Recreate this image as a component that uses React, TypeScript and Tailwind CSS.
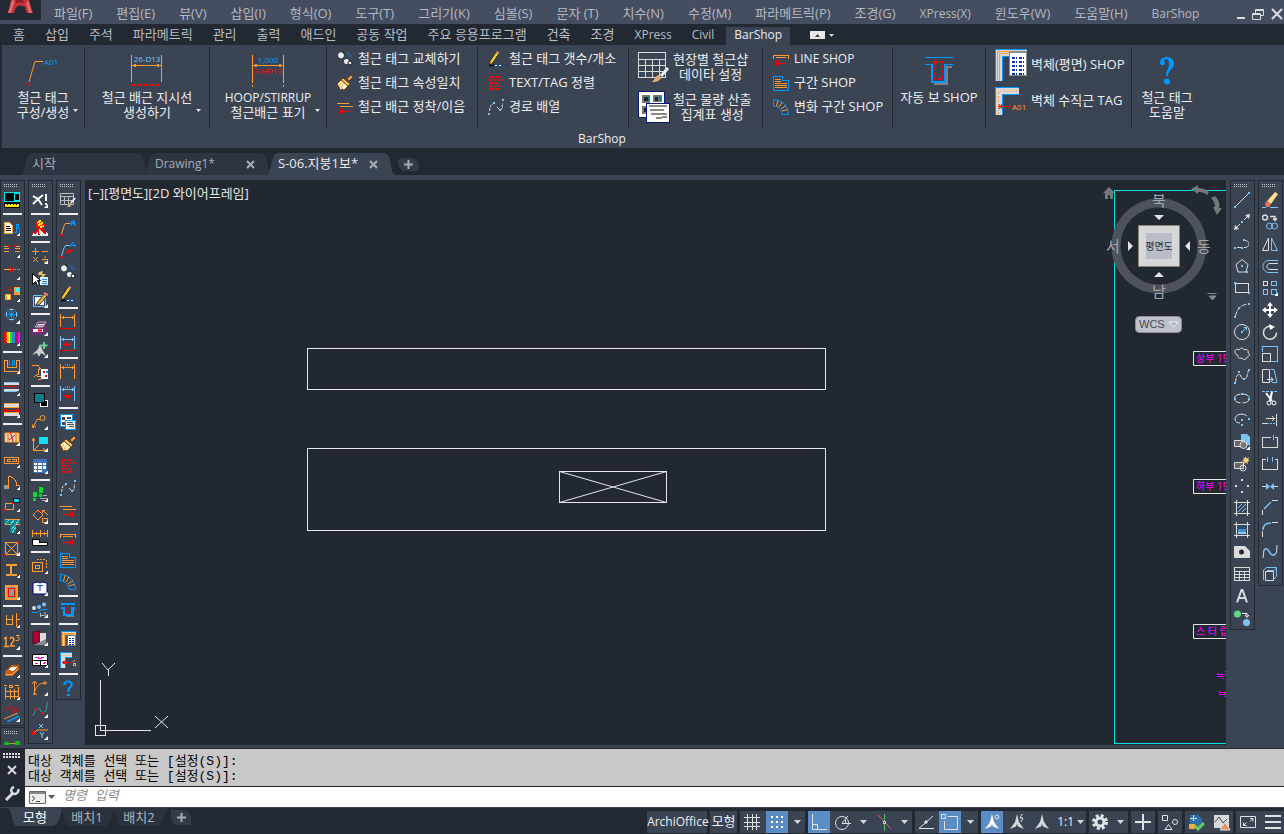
import type { ReactNode } from 'react';
import clsx from 'clsx';

const O = '#ff9b30';
const B = '#0098ff';
const L = '#7cc4f8';
const R = '#ff0000';
const W = '#dcdcdc';
const N = 'none';

// [path, stroke, fill, stroke width, dash]
type Mark = [string, string, string?, number?, string?];
type IconDef = { marks: Mark[]; fly?: boolean; smooth?: boolean };

const tagLine: Mark[] = [
  ['M1.500 14l2.500-8 1.500-2.500H10', O],
  ['M10.500 5.500l1.500-4h2l1.500 4M11 3.500h4', B, N, 1.5],
  ['M.5 14.500h2v1h-2z', R],
];
const swapMarks: Mark[] = [
  ['M8 2c3-1.500 5 0 5 4M11 4l2 2 2-2', '#2d5c96', N, 1.5],
  ['M1 4a3 3 0 1 0 5-2a3 3 0 0 0-5 2z', N, '#e8eef2'],
  ['M5 1h2v2', '#222', N, 1],
  ['M7 11a2.500 2.500 0 1 0 5-1a2.500 2.500 0 0 0-5 1z', N, '#e8eef2'],
  ['M11 12a2 2 0 1 0 4 0a2 2 0 0 0-4 0z', '#111', '#e8eef2', 1],
];
const pencilDim: Mark[] = [
  ['M2 14L1.500 11 8 1l3 1.500L4.500 12z', '#3a2b10', '#f5cf30', 1],
  ['M8 1l1-1 2.500 1.500L10.500 3z', N, '#e88a90'],
  ['M1 14.500h5', '#111', N, 2],
  ['M6 14.500h10', '#1f4c80', N, 3],
  ['M7 14.500h8', '#fff', N, 1, '2 2'],
];
const brushMarks: Mark[] = [
  ['M10 4l4-4 2 2-4 4z', '#7a4010', '#f0a050', 1],
  ['M6 3l7 6-2 2-7-6z', '#7a4010', '#ffd060', 1],
  ['M4 5l7 6-4 4-2-1-2 1-1-3-2-3z', '#7a4010', '#fff6c0', 1],
  ['M4 8l-2 3M6 10l-2 3', O, N, 1],
];
const lapMarks: Mark[] = [
  ['M0 4.500h12M3 7.500h13', O],
  ['M3.500 9v6M12.500 9v6M4 12.500h9M5.500 11v3M10.500 11v3', R],
];
const lineShop: Mark[] = [
  ['M.5 8V4.500h15V8M3 6.500h10', O],
  ['M3.500 9v6M12.500 9v6M4 12.500h8M5.500 11v3M10.500 11v3', R],
];
const sectionShop: Mark[] = [
  ['M.5 1.500h9v4h6v10H.5z', B],
  ['M2 4.500h6M2 6.500h6M2 8.500h12M2 10.500h12M2 12.500h12', O],
];
const arcShop: Mark[] = [
  ['M.5 7V.5c8 0 15 6 15 15H9c0-5-4-8.500-8.500-8.500z', B],
  ['M3.500 7L5 1.500M6 8l3-5M8 10l5-3.500M9 12l5.500-1.500', O],
];
const bricks: Mark[] = [
  ['M1 2h13', R, N, 2, '5 1'],
  ['M1 5h15', R, N, 2, '3 1'],
  ['M1 8h9', R, N, 2, '5 1'],
  ['M1 11h13', R, N, 2, '3 1'],
  ['M1 14h11', R, N, 2, '5 1'],
];
const pathArray: Mark[] = [
  ['M1.500 12l1-5 3-3 2 1M9 8l3 3 2-1 .5-6', W, N, 1, '3 1'],
  ['M0 14h2v2H0zM5 3h2v2H5zM11 10h2v2h-2zM14 0h2v2h-2z', N, L],
];
const beamMarks: Mark[] = [
  ['M6 14.500h7.500V7', '#777'],
  ['M1 2h14M1 6h3v7h8V6h3', B, N, 2],
  ['M6.500 4.500h3v6h-3z', R, N, 1, '2 1'],
];
const wallShop: Mark[] = [
  ['M1 16V1h15v4H5v11z', B, '#dadada', 1],
  ['M2.500 16V3h12M4 16V4.500h10', O],
  ['M7.500 5.500h8v10h-8z', '#777', '#fff', 1],
  ['M10 8v7M13 8v7', '#0b33b8', N, 2, '1 1'],
];
const wallTag: Mark[] = [
  ['M0 0h12v6H6v10H0z', N, '#dadada'],
  ['M.5 16V.5H12M12 5.500H5.500V16', B],
  ['M2 3.500h10', O, N, 1, '1 2'],
  ['M3 10.500h9M6 8l-3 2.500 3 2.500', R],
  ['M13 10l2-2M13 11h2v2h-2z', O],
];
const helpMarks: Mark[] = [
  ['M4.500 5V3.500L6.500 1.500h3l2 2v2.500L8.500 9v3', B, N, 2],
  ['M7 14h3v2H7z', N, B],
];
const dimBar = (c: string): Mark[] => [
  ['M.5 0v13M14.500 0v13M1 3.500h13M3 2v3M12 2v3', c],
];

const ICONS: Record<string, IconDef> = {
  monitor: { marks: [['M0 0h16v10H0z', N, '#00e5ee'], ['M1 1h9v8H1zM11 2h4v6h-4z', N, '#000'], ['M0 10h16v6H0z', N, '#000'], ['M1 12h14v3H1z', N, '#ffee00'], ['M3.500 12v1M6.500 12v1M9.500 12v1M12.500 12v1', '#000']] },
  noteA: { fly: true, marks: [['M.5 2.500h5l3 3v8h-8z', O, '#fff'], ['M2 6.500h4M2 8.500h5M2 10.500h5', '#000'], ['M10 12.500h2V9l1-5h1l1 5v3M12 8.500h3', B]] },
  rebar: { fly: true, marks: [['M0 4.500h5M0 6.500h5M0 9.500h5M11 4.500h5M11 6.500h5M11 9.500h5', O, N, 1], ['M4 3l2 2M10 3l2 2M4 5l2-2M10 5l2-2', R]] },
  breakLine: { fly: true, marks: [['M0 5.500h8', O], ['M9 5.500h7', O, N, 1, '1 1'], ['M6 3.500l4 4M10 3.500l-4 4', R]] },
  matchProp: { fly: true, marks: [['M1 8h6v6H1z', N, '#ff9b30'], ['M3 9h3v4H3z', N, '#ffff80'], ['M10 1h6v8h-6z', N, O], ['M12 2h3v4h-3z', N, '#40f0f0'], ['M3 7l1-3 4-1M6 1l2 2-2 2', R]] },
  snow: { fly: true, smooth: true, marks: [['M7.500 0v13M1 6.500h13M3 2l9 9M12 2l-9 9', B], ['M5 1.500h5M5 11.500h5M2.500 4v5M12.500 4v5', L]] },
  palette: { fly: true, marks: [['M1.500 2v11', R, N, 3], ['M4.500 2v11', '#ffee00', N, 3], ['M7 2v11', '#20e030', N, 2], ['M9.500 2v11', '#2090d0', N, 3], ['M12.500 2v11', '#a02050', N, 3], ['M15 2v11', '#ff00ff', N, 2], ['M2 4.500h3M2 7.500h3M2 10.500h3', O]] },
  channel: { fly: true, marks: [['M.5 2.500h3v7h9v-7h3v11H.5z', O], ['M5.500 2v6M8.500 2v6M10.500 2v6', B]] },
  wallRed: { fly: true, marks: [['M0 3h15v2H0zM0 9h15v2H0z', N, '#dcdcdc'], ['M0 6.500h15', R, N, 1, '4 1'], ['M0 2.500h15M0 11.500h13', L]] },
  wallDots: { fly: true, marks: [['M0 1h15v4H0zM0 11h15v3H0z', N, '#dcdcdc'], ['M0 5.500h15M0 10.500h15M0 1.500h15', O], ['M.5 7.500h2v2H.5zM12.500 7.500h2v2h-2z', R, '#000'], ['M4 8.500h8', R, N, 1, '1 1']] },
  column: { fly: true, smooth: true, marks: [['M1 3h14v9H1z', O, '#e0e0e0'], ['M4 3v9M12 3v9', O, N, 2], ['M6 1l4 14M5 10l6-5', R]] },
  slab: { fly: true, marks: [['M.5 5.500h14v6H.5zM3 7.500h9v2H3z', O], ['M7.500 0v16', R, N, 1, '2 1']] },
  door: { fly: true, marks: [['M0 11h5v4H0z', N, '#999'], ['M4.500 14V2.500c5 0 8 4 8 9h3', O]] },
  boxes: { fly: true, marks: [['M1.500 7.500h8v6h-8z', O], ['M9.500 2.500h6v4h-6z', '#000', '#00e5ee', 1], ['M0 13h2v2H0zM8 6h2v2H8z', N, R]] },
  hatchT: { fly: true, marks: [['M0 1h16v6h-4v8H6V7H0z', N, '#167f88'], ['M1 6l5-5M6 7l5-6M7 12l8-10M8 15l4-6', '#50e0e0'], ['M.5 1.500h15M.5 6.500H6M12 6.500h4', O]] },
  crossBox: { fly: true, smooth: true, marks: [['M1.500 2.500h12v12h-12zM1.500 2.500l12 12M13.500 2.500l-12 12', O], ['M0 14h2v2H0zM13 1h2v2h-2z', N, R]] },
  ibeam: { fly: true, marks: [['M2 3h11M2 13h11M7 3v10', O, N, 2]] },
  frameRed: { fly: true, marks: [['M2 2h11v13H2z', O, '#999', 2], ['M4.500 4.500h6v8h-6z', R]] },
  ba: { fly: true, marks: [['M2.500 3v9h6V3M2.500 7.500h6M12.500 1v14M13 7.500h3', O]] },
  num: { fly: true, smooth: true, marks: [['M0 5l2-1.500V12M0 12.500h5M6 5l1-1.500h2l1 2L6.500 12H11', O, N, 1.5], ['M12 1.500h3l-1.500 2 2 1-1 2h-3', O]] },
  stairs: { fly: true, marks: [['M1 10l6-7h8v5l-7 6H1z', N, '#c86010'], ['M4 8l3-3h6l-4 4z', N, '#fff'], ['M2 12h7l5-5', '#ffb060']] },
  dimStack: { fly: true, marks: [['M1.500 3v12M14.500 3v12M6.500 5v10M10.500 5v10M2 7.500h12M2 12.500h12', O], ['M0 1.500h3M5.500 1.500h3v2h-3zM11 1.500h4', O]] },
  rotateLine: { fly: true, smooth: true, marks: [['M1 6c0-5 7-6 9-3l2 3M12 1v5H7', R], ['M0 13l14-6', O], ['M3 16l12-6', B, N, 1.5]] },
  nodes: { smooth: true, marks: [['M3 4.500h10', '#c09050'], ['M0 5a2.500 2.500 0 1 0 5 0a2.500 2.500 0 0 0-5 0zM11 4a2.500 2.500 0 1 0 5 0a2.500 2.500 0 0 0-5 0z', N, '#10c010'], ['M0 9h10', B, N, 2]] },

  xbang: { fly: true, smooth: true, marks: [['M1 4l5 3 5-4M1 12l5-5 4 6', '#fff', N, 2], ['M14 2v7M14 11v2', '#fff', N, 2]] },
  fire: { marks: [['M4 1h7l2 4-2 4H5L3 5z', N, R], ['M5 3l3-2-1 4 3-2-1 4 3-1', '#ffee00', N, 1.5], ['M0 16l3-5 4-2 3 1 6 3v3z', N, '#eee'], ['M2 14l4-4 1 5M9 9l5 5', R, N, 1.5]] },
  calc: { fly: true, smooth: true, marks: [['M3.500 0v7M0 3.500h7M10 3.500h6M1 9l5 5M6 9l-5 5M10 11.500h6', O], ['M13 8v2M13 13v2', O]] },
  quickSel: { smooth: true, marks: [['M7 2l4-1-1 3h4l-5 5 1-4H6z', N, '#f0c860'], ['M8 7h8v8H8z', N, '#d8f0ff'], ['M10 9.500h5M10 11.500h5M10 13.500h5', '#2090e0'], ['M.5 3.500v11l3-3 2 4 2-1-2-4h3z', '#000', '#fff']] },
  pencilBox: { fly: true, smooth: true, marks: [['M1.500 3.500h12v11h-12z', L, '#1c4f80'], ['M3 5h9v8H3z', N, '#fff'], ['M3 13l9-8', L], ['M4 14l1-3 7-9 3 2-7 8z', '#4a3510', '#e0b840'], ['M12 1l4 2', '#e88a90', N, 2]] },
  printer: { fly: true, smooth: true, marks: [['M3 7l3-5h8l-3 5z', '#cfa0c8', '#5c3a60'], ['M6 4.500h6M5 6h6', '#eee'], ['M0 8h11l4-3v6l-3 4H0z', N, '#703070'], ['M1 9h10v3H1z', N, '#f0e4f0'], ['M6 10.500h4', R, N, 2]] },
  airPlus: { fly: true, smooth: true, marks: [['M8 2L6 7l-6 6 5-2 2 4 2-4 5 3-4-7z', N, '#d0d0d0'], ['M12 0v7M8.500 3.500h7', '#60d888', N, 2]] },
  faceDice: { marks: [['M0 1.500h6l2 3-2 2v4l-4 2', O], ['M9.500 5.500h6v9h-6z', '#fff', '#fff'], ['M11 7h1v1h-1zM13 11h1v1h-1z', R, R], ['M14 7h1v1h-1z', B, '#00a040'], ['M5 12.500h4M6 15.500h3', O]] },
  layers: { marks: [['M8.500 8.500h7v6h-7z', '#fff', '#000'], ['M2.500 1.500h10v9h-10z', '#000', '#0a8088', 1]] },
  leader: { fly: true, smooth: true, marks: [['M8 4a2.500 2.500 0 1 0 5 0a2.500 2.500 0 0 0-5 0zM8.500 5.500H5l-4 8M0 10l1 4 3-2', O]] },
  ucsBox: { fly: true, smooth: true, marks: [['M7 1h9v7H7z', N, '#10e0f0'], ['M1.500 2v12.500H14M0 5l1.500-3L3 5M11 12l3 2.500M2 14l5-5', O]] },
  gridBlue: { fly: true, marks: [['M1 1h14v14H1z', N, '#4070b8'], ['M2 5h3v2H2zM6 5h4v2H6zM11 5h3v2h-3zM2 8h3v3H2zM6 8h4v3H6zM11 8h3v3h-3zM2 12h3v2H2zM6 12h4v2H6z', N, '#fff']] },
  feet: { fly: true, marks: [['M1 6h4v5H1zM1 12h3v3H1zM7 1h4v6H7zM7 8h3v3H7z', N, '#00e020'], ['M8 12.500h8M10 14.500h6M11 9l4 1', '#aaa']] },
  rotBox: { fly: true, smooth: true, marks: [['M6 2l5 5-5 5-5-5z', O], ['M3 4l8 8M3 3.500h4', R, N, 1, '1 2'], ['M10 2.500h3M10.500 2v3M10 2l6 5M10.500 10.500h5v4h-5z', O]] },
  dimPage: { marks: [['M.5 0v7M8.500 0v7M15.500 0v7M1 3.500h14M4.500 2v3M12.500 2v3', O], ['M.5 9.500h7v3h8v3H.5z', '#000', '#fff']] },
  copyDash: { fly: true, marks: [['M.5 4.500h10v9H.5zM3.500 7.500h4v3h-4z', O], ['M5 1.500h9v9', O, N, 1, '2 1']] },
  book: { fly: true, smooth: true, marks: [['M1 3l5-1 2 1 2-1 5 1v11H1z', '#000080', '#fff'], ['M5 5.500h6M8 5v6', '#1040ff']] },
  dots: { fly: true, smooth: true, marks: [['M0 6a2 2 0 1 0 4 0a2 2 0 0 0-4 0z', N, '#ddd'], ['M5 5a2 2 0 1 0 4 0a2 2 0 0 0-4 0zM10 2.500a2 2 0 1 0 4 0a2 2 0 0 0-4 0z', N, L], ['M0 10.500h6l4-3h5', B], ['M8.500 11v4M9 13.500h3M13 10v4', '#bbb']] },
  bookRed: { fly: true, smooth: true, marks: [['M1 2l7-1v10l-7 3z', '#600020', '#b80038'], ['M8 3h6v8l-6 2z', N, '#ddd'], ['M2 15h12V9z', N, '#888']] },
  layout: { fly: true, marks: [['M.5 2.500h15v11H.5zM.5 8.500h15M8.500 8v6', '#000', '#fff'], ['M3 5.500h3v1h3v-1h3M3 11h3M11 12l3-2', '#ff00ff', N, 1]] },
  curveDim: { fly: true, smooth: true, marks: [['M2.500 1v14M0 4l2.500-3L5 4M1 14h4M3 11c1-5 5-8 10-8M12 2h2v2h-2z', O]] },
  spline2: { fly: true, smooth: true, marks: [['M1 14l3-7 3-1 3 5 4-2 1.500-9', '#2aa090'], ['M4 6h2v2H4zM9 10h2v2H9z', N, R]] },
  coord: { fly: true, smooth: true, marks: [['M1 10l4-4h11', O], ['M0 11V6l4 4z', N, R], ['M7 0l4 4M11 0l-4 4M8 8l2 3 2-3M10 11v3', L]] },

  tableBrush: { smooth: true, marks: [['M.5 1.500h13v11H.5zM.5 4.500h13M.5 8.500h13M4.500 4v8M8.500 4v8', '#bbb'], ['M7 15l3-4 2 1-2 3z', N, '#d8a870'], ['M11 11l4-5', '#eee', N, 2]] },
  tag1: { smooth: true, marks: tagLine },
  tag2: { smooth: true, marks: [['M1.500 14l2.500-8 1.500-2.500H10', L], ['M10.500 4.500l2-4h1l2 4M11 3.500h4', B], ['M.5 14.500h2v1h-2z', R], ['M5 12l3-5 2 2 4-3-3 5-2-1z', N, R]] },
  swap: { smooth: true, marks: swapMarks },
  pencilDim: { smooth: true, marks: pencilDim },
  dimO: { marks: [...dimBar(O), ['M0 14.500h16', R, N, 1, '1 1']] },
  dimL: { marks: [...dimBar(L), ['M0 14.500h16', R, N, 1, '1 1'], ['M3 10l3-4 2 2 4-3-3 5-2-1z', N, R]] },
  dimO2: { marks: [...dimBar(O), ['M5 1h6', B, N, 2, '1 1'], ['M3 6h10', R, N, 2, '1 1'], ['M.5 12v3M14.500 12v3', O]] },
  dimL2: { marks: [...dimBar(L), ['M5 1h6', B, N, 2, '1 1'], ['M3 6h10', R, N, 2, '1 1'], ['M4 9l8 0-4 5z', N, R], ['M.5 12v3M14.500 12v3', L]] },
  sheets: { marks: [['M.5.5h12v12H.5z', B, '#fff', 1], ['M2 3h3v3H2zM7 3h4v2H7zM2 8h3v3H2z', N, '#444'], ['M5.500 6.500h10v9h-10z', B, '#eee'], ['M7 8.500h6M7 10.500h7M9 12.500h5', '#555']] },
  brush: { smooth: true, marks: brushMarks },
  bricks: { marks: bricks },
  pathArray: { smooth: true, marks: pathArray },
  lap: { marks: lapMarks },
  lineShop: { marks: lineShop },
  sectionShop: { marks: sectionShop },
  arcShop: { smooth: true, marks: arcShop },
  beam: { marks: beamMarks },
  wallShop: { marks: wallShop },
  wallTag: { marks: wallTag },
  help: { smooth: true, marks: helpMarks },

  line: { smooth: true, marks: [['M2 14L14 2', W], ['M0 14h2v2H0zM14 0h2v2h-2z', N, L]] },
  xline: { smooth: true, marks: [['M1 15L6 10M10 6l5-5', W], ['M0 16l1-5 4 4zM16 0l-1 5-4-4z', N, W], ['M7 7h2v2H7z', N, L]] },
  pline: { smooth: true, marks: [['M3 11.500h8c5 0 5-7 0-7', W, N, 1, '6 1'], ['M0 11h2v2H0zM7 11h2v2H7zM9 3h2v2H9z', N, L]] },
  polygon: { smooth: true, marks: [['M8 1.500l6 5-2 7.500H4L2 6.500z', W], ['M7 7h2v2H7zM12 13h2v2h-2z', N, L]] },
  rect: { marks: [['M1.500 3.500h13v9h-13z', W], ['M0 2h2v2H0zM14 12h2v2h-2z', N, L]] },
  arc: { smooth: true, marks: [['M1.500 14c1-6 5-11 12-12', W, N, 1, '5 1'], ['M0 14h2v2H0zM4 5h2v2H4zM14 1h2v2h-2z', N, L]] },
  circle: { smooth: true, marks: [['M.5 8a7.500 7.500 0 1 0 15 0a7.500 7.500 0 0 0-15 0z', W], ['M8 8l4-4M9.500 3.500h3v3', L], ['M7 7h2v2H7z', N, L]] },
  cloud: { smooth: true, marks: [['M2 8C-1 5 2 2 5 4c1-3 5-2 5 0 3-2 5 1 4 3 3 1 1 4-1 4 0 3-4 3-5 1-3 1-5-1-4-3-1 0-2 0-2-1z', W]] },
  spline: { smooth: true, marks: [['M1.500 14l1-6 3-2 3 5 4-1 2-8', W, N, 1, '4 1'], ['M0 14h2v2H0zM4 3h2v2H4zM9 10h2v2H9zM14 1h2v2h-2z', N, L]] },
  ellipse: { smooth: true, marks: [['M.5 8.500a7.500 4.500 0 1 0 15 0a7.500 4.500 0 0 0-15 0z', W, N, 1, '8 2'], ['M7 3h2v2H7zM0 8h2v2H0zM14 8h2v2h-2z', N, L]] },
  ellArc: { smooth: true, marks: [['M13 4C8 0 1 3 1 7c0 3 3 4 5 4', W], ['M7 7h2v2H7zM14 6h2v2h-2zM7 12h2v2H7z', N, L]] },
  insert: { fly: true, smooth: true, marks: [['M7 0h6l3 3v8H7z', N, L], ['M.5 6.500h9v6h-9z', W, '#666'], ['M6 11a3.500 3.500 0 1 0 7 0a3.500 3.500 0 0 0-7 0z', W, '#777']] },
  makeBlock: { smooth: true, marks: [['M.5 6.500h9v6h-9z', W, '#666'], ['M6 12a3 3 0 1 0 6 0a3 3 0 0 0-6 0z', W], ['M11.500 0l1 2.500 3-1-1.500 2.500 2 1-2.500.5.500 2.500-2-1.500-2 1.500.5-2.500L7 5l3-1-1-2.500 2 1z', N, '#ffd070']] },
  point: { marks: [['M7 1h2v2H7zM7 13h2v2H7zM1 7h2v2H1zM13 7h2v2h-2z', N, W]] },
  hatch: { smooth: true, marks: [['M2.500 0v16M13.500 0v16M0 2.500h16M0 13.500h16', W], ['M4 8l4-4M4 12l8-8M8 12l4-4', L]] },
  gradient: { marks: [['M4 4h8v3H4z', N, '#224f78'], ['M4 7h8v3H4z', N, '#4a90c8'], ['M4 10h8v2H4z', N, '#8ccaf8'], ['M2.500 0v16M13.500 0v16M0 2.500h16M0 13.500h16', W]] },
  region: { smooth: true, marks: [['M0 2h11l5 5v7H0z', N, W], ['M5 8a2.500 2.500 0 1 0 5 0a2.500 2.500 0 0 0-5 0z', N, '#222933']] },
  table: { marks: [['M.5 1.500h15v13H.5zM.5 5.500h15M.5 8.500h15M.5 11.500h15M5.500 5v9M10.500 5v9', W]] },
  letterA: { smooth: true, marks: [['M3 14.500L7.500 2h1L13 14.500M5 10h6', W, N, 2]] },
  addSel: { smooth: true, marks: [['M0 4a3.500 3.500 0 1 0 7 0a3.500 3.500 0 0 0-7 0z', N, '#60d888'], ['M9 12.500a3.500 3.500 0 1 0 7 0a3.500 3.500 0 0 0-7 0z', N, L], ['M8 3.500h5V6M11 5l2 2.500L15 5', '#fff']] },

  eraser: { smooth: true, marks: [['M5 9l8-9 3 2-7 10z', N, '#ffe08a'], ['M3 11l2-2 4 3-2 3H4z', N, '#e87060'], ['M0 15.500h4M8 15.500h8', L]] },
  copy: { smooth: true, marks: [['M.5 3.500a2.500 2.500 0 1 0 5 0a2.500 2.500 0 0 0-5 0zM8 2.500h5V6M11 4.500l2 2 2-2', W, N, 1.5], ['M4.500 12a3 3 0 1 0 6 0a3 3 0 0 0-6 0zM9.500 12a3 3 0 1 0 6 0a3 3 0 0 0-6 0z', L]] },
  mirror: { smooth: true, marks: [['M6.500 2v12.500h-6z', W], ['M9.500 2v12.500h6z', L]] },
  offset: { smooth: true, marks: [['M16 2.500H7c-8 0-8 12 0 12h9', L], ['M16 5.500H8c-4 0-4 6 0 6h8', W]] },
  array: { fly: true, marks: [['M1.500 1.500h4v4h-4z', W], ['M9.500 1.500h5v4h-5zM1.500 9.500h4v5h-4zM9.500 9.500h5v5h-5z', L]] },
  move: { smooth: true, marks: [['M8 2v12M2 8h12', '#fff', N, 2], ['M8 0l3 4H5zM8 16l3-4H5zM0 8l4-3v6zM16 8l-4-3v6z', N, '#fff']] },
  rotate: { smooth: true, marks: [['M10 2.500a6.500 6.500 0 1 0 4.500 6', W, N, 1.5], ['M7 0l6 3-5 3z', N, '#fff']] },
  scale: { marks: [['M.5 6V.5h15v15H9', L], ['M.5 7.500h8v8h-8z', W]] },
  stretch: { smooth: true, marks: [['M8 14.500H.5v-13h7v13M5 11.500h6M9 9l2 2.500-2 2.500', W], ['M9 1.500h3l3 13h-5', L]] },
  trim: { smooth: true, marks: [['M0 1.500h16', L, N, 1, '3 1'], ['M4 3l6 8M10 2L8 11', '#fff', N, 2], ['M5 13a2 2 0 1 0 4 0a2 2 0 0 0-4 0zM10 13a2 2 0 1 0 4 0a2 2 0 0 0-4 0z', '#fff']] },
  extend: { marks: [['M0 11.500h5M14.500 2v12M4 6.500h8M10 4l2 2.500L10 9', W], ['M5 11.500h9', L, N, 1, '2 1']] },
  breakPt: { marks: [['M13 3.500h2.500v10H.5v-10H9', W], ['M11.500 1v5', L]] },
  breakTwo: { marks: [['M13 3.500h2.500v10H.5v-10H4', W], ['M5.500 1v5M10.500 1v5', L]] },
  join: { smooth: true, marks: [['M0 8.500h5M11 8.500h5', W], ['M4 5l4 3.500L4 12zM12 5L8 8.500l4 3.500z', N, L]] },
  chamfer: { smooth: true, marks: [['M.5 15v-5M10 .5h6', W], ['M2 9l7-7', L, N, 1.5]] },
  fillet: { smooth: true, marks: [['M.5 15v-6M10 .5h6', W], ['M1 8c0-5 3-7 8-7', L, N, 1.5]] },
  blend: { smooth: true, marks: [['M1 14l1-8M14.500 9l.5-8', W], ['M2 6c3-3 4 0 6 3s4 3 6 0', L, N, 1.5]] },
  explode: { smooth: true, marks: [['M3.500 5.500h8v9h-8z', W], ['M1.500 14V4l3-2.500h10v9l-3 3M5 4.500h7l2-2', L]] },
};

function Icon({ name, size = 16 }: { name: string; size?: number }) {
  const def = ICONS[name];
  return (
    <svg
      width={size}
      height={size}
      viewBox="0 0 16 16"
      shapeRendering={def.smooth ? 'auto' : 'crispEdges'}
      className="shrink-0"
      aria-hidden="true"
    >
      {def.marks.map(([d, stroke, fill, width, dash], i) => (
        <path key={i} d={d} stroke={stroke} fill={fill ?? 'none'} strokeWidth={width ?? 1} strokeDasharray={dash} />
      ))}
      {def.fly && <path d="M16 12v4h-4z" fill="#fff" />}
    </svg>
  );
}

// '|' starts a new section of the toolbar
const LEFT_1 = 'monitor | noteA rebar breakLine matchProp snow palette | channel wallRed wallDots | column slab door boxes hatchT crossBox ibeam frameRed | ba num | stairs dimStack rotateLine';
const LEFT_2 = 'xbang | fire | calc quickSel pencilBox | printer airPlus faceDice | layers leader ucsBox gridBlue | feet rotBox dimPage | copyDash book dots | bookRed layout | curveDim spline2 coord';
const LEFT_3 = 'tableBrush | tag1 tag2 swap pencilDim | dimO dimL | dimO2 dimL2 | sheets brush bricks pathArray lap | lineShop sectionShop arcShop | beam | wallShop wallTag | help';
const RIGHT_1 = 'line xline pline polygon rect arc circle cloud spline ellipse ellArc insert makeBlock point hatch gradient region table letterA addSel';
const RIGHT_2 = 'eraser copy mirror offset array move rotate scale stretch trim extend breakPt breakTwo join chamfer fillet blend explode';

function Grip() {
  return (
    <svg width="15" height="8" className="ml-[3px] shrink-0" shapeRendering="crispEdges" aria-hidden="true">
      <path d="M0 3.500h14M0 5.500h14" stroke="#c4c8ce" strokeDasharray="1 1" />
    </svg>
  );
}

function Toolbar({ items, label }: { items: string; label: string }) {
  return (
    <div role="toolbar" aria-label={label} className="flex w-[25px] shrink-0 flex-col border border-[#222933] bg-[#3b4453]">
      <Grip />
      {items.split(' ').map((name, i) =>
        name === '|' ? (
          <div key={i} className="flex h-1.5 shrink-0 items-center px-0.5">
            <div className="h-0.5 w-full bg-[#f0f0f0]" />
          </div>
        ) : (
          <button key={i} type="button" aria-label={name} className="flex h-[22px] w-full shrink-0 items-center pl-[3px] hover:bg-[#5a6578]">
            <Icon name={name} />
          </button>
        ),
      )}
    </div>
  );
}

function Caret({ className }: { className?: string }) {
  return (
    <svg width="7" height="4" viewBox="0 0 7 4" className={clsx('shrink-0', className)} aria-hidden="true">
      <path d="M0 0h7L3.500 4z" fill="#d4d6da" />
    </svg>
  );
}

const MENUS = ['파일(F)', '편집(E)', '뷰(V)', '삽입(I)', '형식(O)', '도구(T)', '그리기(K)', '심볼(S)', '문자 (T)', '치수(N)', '수정(M)', '파라메트릭(P)', '조경(G)', 'XPress(X)', '윈도우(W)', '도움말(H)', 'BarShop'];
const TABS = ['홈', '삽입', '주석', '파라메트릭', '관리', '출력', '애드인', '공동 작업', '주요 응용프로그램', '건축', '조경', 'XPress', 'Civil', 'BarShop'];

const isLatin = (s: string) => /^[\x00-\x7f]+$/.test(s);

function MenuBar() {
  return (
    <header className="flex h-6 shrink-0 bg-[#454e60]">
      <div className="h-5 w-[41px] shrink-0 bg-[#222933]">
        <svg width="41" height="20" viewBox="0 0 41 20" aria-hidden="true">
          <path d="M11 0h18l4 13h-6l-2-6c-3-2-6-2-9 0l-2 6H8z" fill="#c4333a" />
          <path d="M12 0l-4 13h3l4-12zM26 3l3 10h3L28 0z" fill="#e2686c" />
          <path d="M16 0l-1 4c3-2 7-2 9 0l-1-4z" fill="#8e1c24" />
        </svg>
      </div>
      <nav className="flex flex-1 items-center gap-6 overflow-hidden pl-[13px] pt-1 whitespace-nowrap text-[#b4b8c0]">
        {MENUS.map((m) => (
          <a key={m} href="#" className={isLatin(m) ? 'text-[12px]' : 'text-[13px]'}>{m}</a>
        ))}
      </nav>
      <div className="flex items-center gap-1.5 pt-1">
        <button type="button" aria-label="최소화">
          <svg width="11" height="12"><path d="M2 10h8" stroke="#dcdcdc" strokeWidth="2" /></svg>
        </button>
        <button type="button" aria-label="복원">
          <svg width="13" height="12" fill="none" stroke="#dcdcdc"><path d="M.5 5.500h8v6h-8zM.5 6.500h8M3.500 5V1.500h8v6H9M3.500 2.500h8" /></svg>
        </button>
        <button type="button" aria-label="닫기">
          <svg width="13" height="12"><path d="M1 1l10 10M11 1L1 11" stroke="#dcdcdc" strokeWidth="2" /></svg>
        </button>
      </div>
    </header>
  );
}

function RibbonTabs() {
  return (
    <nav className="flex h-[21px] shrink-0 items-end gap-1 bg-[#222933] pl-[5px] whitespace-nowrap text-[#b9bdc4]">
      {TABS.map((t) => (
        <button
          key={t}
          type="button"
          className={clsx(
            'flex h-[18px] items-center px-2 pb-0.5',
            isLatin(t) ? 'text-[12px]' : 'text-[13px]',
            t === 'BarShop' && 'bg-[#3b4453] text-[#e8eaee]',
          )}
        >
          {t}
        </button>
      ))}
      <button type="button" aria-label="리본 최소화" className="mb-1.5 ml-4 flex items-center gap-1">
        <svg width="15" height="8"><path d="M0 0h15v8H0z" fill="#e8e8e8" /><path d="M5 6l2.500-3L10 6z" fill="#444" /></svg>
        <svg width="5" height="3"><path d="M0 0h5L2.500 3z" fill="#d4d6da" /></svg>
      </button>
    </nav>
  );
}

function Group({ className, children, last }: { className: string; children: ReactNode; last?: boolean }) {
  return (
    <div className={clsx('mt-0.5 h-[81px] shrink-0', !last && 'border-r border-[#222933]', className)}>
      {children}
    </div>
  );
}

function BigButton({ icon, lines, menu }: { icon: ReactNode; lines: string[]; menu?: boolean }) {
  return (
    <button type="button" className="flex w-full flex-col items-center gap-[3px] pt-2">
      <span className="flex h-8 items-center justify-center">{icon}</span>
      <span className="grid grid-cols-[9px_auto_9px] items-end">
        <span />
        <span className="flex flex-col items-center leading-[15px]">
          {lines.map((l) => (
            <span key={l} className={isLatin(l) ? 'text-[12px]' : 'text-[13px]'}>{l}</span>
          ))}
        </span>
        {menu ? <svg width="5" height="3" className="mb-2 ml-1"><path d="M0 0h5L2.500 3z" fill="#e0e2e6" /></svg> : <span />}
      </span>
    </button>
  );
}

function SmallButtons({ items }: { items: [string, string][] }) {
  return (
    <div className="flex flex-col pl-2.5">
      {items.map(([icon, label]) => (
        <button key={label} type="button" className="flex h-6 items-center gap-[5px] text-left">
          <Icon name={icon} />
          <span className={isLatin(label) ? 'text-[12px]' : 'text-[13px]'}>{label}</span>
        </button>
      ))}
    </div>
  );
}

function Ribbon() {
  return (
    <section aria-label="BarShop" className="ml-0.5 h-[103px] shrink-0 overflow-hidden bg-[#3b4453] whitespace-nowrap text-[#eceef1]">
      <div className="w-[1200px]">
        <div className="flex h-[85px]">
          <Group className="w-[83px]">
            <BigButton
              menu
              lines={['철근 태그', '구성/생성']}
              icon={
                <svg width="34" height="32" fill="none" className="overflow-visible">
                  <path d="M3 27l6-20.500h8" stroke={O} />
                  <circle cx="2.500" cy="29" r="1.500" stroke={R} />
                  <text x="18" y="10" fill={B} fontSize="8">A01</text>
                </svg>
              }
            />
          </Group>
          <Group className="w-[125px]">
            <BigButton
              menu
              lines={['철근 배근 지시선', '생성하기']}
              icon={
                <svg width="32" height="32" fill="none" className="overflow-visible" shapeRendering="crispEdges">
                  <path d="M.5 0v27M30.500 0v27M1 10.500h29" stroke={O} />
                  <path d="M1 10.500l4-2v4zM30 10.500l-4-2v4z" fill={O} />
                  <path d="M0 30h31" stroke={R} strokeWidth="2" strokeDasharray="2 1" />
                  <text x="16" y="7" textAnchor="middle" fill={L} fontSize="8">26-D13</text>
                </svg>
              }
            />
          </Group>
          <Group className="w-[117px]">
            <BigButton
              menu
              lines={['HOOP/STIRRUP', '철근배근 표기']}
              icon={
                <svg width="32" height="32" fill="none" className="overflow-visible" shapeRendering="crispEdges">
                  <path d="M.5 0v28M31.500 0v28M1 10.500h30M.5 30v2M31.500 30v2" stroke={O} />
                  <path d="M1 10.500l4-2v4zM31 10.500l-4-2v4z" fill={O} />
                  <text x="16" y="8" textAnchor="middle" fill={B} fontSize="8">1,000</text>
                  <text x="16" y="19" textAnchor="middle" fill={R} fontSize="8">3-HD13</text>
                </svg>
              }
            />
          </Group>
          <Group className="w-[151px]">
            <SmallButtons items={[['swap', '철근 태그 교체하기'], ['brush', '철근 태그 속성일치'], ['lap', '철근 배근 정착/이음']]} />
          </Group>
          <Group className="w-[151px]">
            <SmallButtons items={[['pencilDim', '철근 태그 갯수/개소'], ['bricks', 'TEXT/TAG 정렬'], ['pathArray', '경로 배열']]} />
          </Group>
          <Group className="w-[134px]">
            <div className="flex flex-col pl-[9px]">
              <button type="button" className="flex h-10 items-center gap-[3px] text-[13px] leading-[15px]">
                <svg width="32" height="32" fill="none">
                  <path d="M.5 1.500h27v25H.5zM.5 8.500h27M.5 14.500h27M.5 20.500h27M7.500 8v18M14.500 8v18M21.500 8v18" stroke="#dcdcdc" shapeRendering="crispEdges" />
                  <path d="M13 31c4-1 3-6 8-7l2 3c-2 4-6 4-10 4z" fill="#e0ac74" />
                  <path d="M23 25l7-8" stroke="#f0f0f0" strokeWidth="3" />
                </svg>
                <span>현장별 철근샵<br />데이타 설정</span>
              </button>
              <button type="button" className="flex h-10 items-center gap-[3px] text-[13px] leading-[15px]">
                <svg width="32" height="32" fill="none" shapeRendering="crispEdges">
                  <path d="M.5.5h26v26H.5z" fill="#fff" stroke="#0a1a7a" />
                  <path d="M4 4h8v8H4zM15 4h9v7h-9zM4 15h8v8H4z" fill="#777" />
                  <path d="M6 6h4v4H6zM17 6h3v4h-3zM6 17h4v4H6z" fill="#223" />
                  <path d="M10 5h2v5h-2zM21 5h2v5h-2z" fill="#0a8088" />
                  <path d="M8.500 12.500h23v19h-23z" fill="#fff" stroke="#0a1a7a" />
                  <path d="M11 15h18M12 19h14M13 23h16M18 27h6M24 26h5" stroke="#888" strokeWidth="2" />
                </svg>
                <span>철근 물량 산출<br />집계표 생성</span>
              </button>
            </div>
          </Group>
          <Group className="w-[130px]">
            <SmallButtons items={[['lineShop', 'LINE SHOP'], ['sectionShop', '구간 SHOP'], ['arcShop', '변화 구간 SHOP']]} />
          </Group>
          <Group className="w-[93px]">
            <BigButton
              lines={['자동 보 SHOP']}
              icon={
                <svg width="28" height="32" fill="none">
                  <path d="M9 29h13V12h5" stroke="#7c8088" strokeWidth="2" />
                  <path d="M0 2.500h28M0 9.500h7M20 9.500h8" stroke={B} />
                  <path d="M7 9v18h13V9" stroke={B} strokeWidth="2" />
                  <path d="M10 7h7v17h-7z" stroke={R} strokeWidth="2" strokeDasharray="3 2" />
                </svg>
              }
            />
          </Group>
          <Group className="w-[146px]">
            <div className="flex flex-col pl-[9px]">
              <button type="button" className="flex h-9 items-center gap-1 text-[13px]">
                <svg width="32" height="32" fill="none" shapeRendering="crispEdges">
                  <path d="M0 0h32v8H8v24H0z" fill="#dadada" />
                  <path d="M.5 32V.5H32M7.500 32V7.500H14" stroke={B} />
                  <path d="M2.500 32V2.500h11M4.500 32V4.500H14" stroke={O} />
                  <path d="M14 2h18v25H14z" fill="#8a8a8a" />
                  <path d="M15 4h16v22H15z" fill="#fff" />
                  <path d="M17 9h5M24 9h5M17 13h5M24 13h5M17 17h5M24 17h5M17 21h5M24 21h5M17 25h5M24 25h5" stroke="#0b33b8" strokeWidth="2" strokeDasharray="3 1" />
                </svg>
                <span>벽체(평면) SHOP</span>
              </button>
              <button type="button" className="flex h-9 items-center gap-1 text-[13px]">
                <svg width="32" height="28" fill="none" className="overflow-visible">
                  <path d="M0 0h24v7H7v21H0z" fill="#dadada" />
                  <path d="M.5 28V.5H24M24 7.500H7.500V28" stroke={B} />
                  <path d="M3.500 27V4H24" stroke={O} strokeDasharray="2 2" />
                  <path d="M3 19.500h13" stroke={R} />
                  <path d="M4 17l3 5M7 17l-3 5" stroke={R} />
                  <text x="17" y="23" fill={O} fontSize="8">A01</text>
                </svg>
                <span>벽체 수직근 TAG</span>
              </button>
            </div>
          </Group>
          <Group className="w-[70px]" last>
            <BigButton
              lines={['철근 태그', '도움말']}
              icon={
                <svg width="16" height="32">
                  <path d="M1 8c0-4 3-6 7-6s7 3 7 7c0 5-6 6-6 12H7c0-6 3-7 3-12 0-3-1-5-3-5s-2 2-1 4c0 3-5 3-5 0z" fill={B} />
                  <circle cx="8" cy="26.500" r="3" fill={B} />
                </svg>
              }
            />
          </Group>
        </div>
        <h2 className="text-center text-[12px] leading-[17px]">BarShop</h2>
      </div>
    </section>
  );
}

function DocTab({ label, active, closable }: { label: string; active?: boolean; closable?: boolean }) {
  const fill = active ? '#3b4453' : '#2d3542';
  return (
    <div className={clsx('-ml-[7px] flex h-[22px] w-[130px]', active ? 'text-[#e8eaee]' : 'text-[#a6abb4]')}>
      <svg width="12" height="22" className="shrink-0"><path d="M0 22C7 21 3 1 12 0v22z" fill={fill} /></svg>
      <div className={clsx('flex flex-1 items-center justify-between pr-1.5', active ? 'bg-[#3b4453]' : 'bg-[#2d3542]')}>
        <button type="button" className={isLatin(label) ? 'text-[12px]' : 'text-[13px]'}>{label}</button>
        {closable && (
          <button type="button" aria-label={`${label} 닫기`}>
            <svg width="9" height="9"><path d="M1 1l7 7M8 1L1 8" stroke="#a8adb5" strokeWidth="2" /></svg>
          </button>
        )}
      </div>
      <svg width="12" height="22" className="shrink-0"><path d="M12 22C5 21 9 1 0 0v22z" fill={fill} /></svg>
    </div>
  );
}

function DocTabs() {
  return (
    <nav className="flex h-8 shrink-0 items-end border-b-[5px] border-[#3b4453] bg-[#222933] pl-[27px] whitespace-nowrap">
      <DocTab label="시작" />
      <DocTab label="Drawing1*" closable />
      <DocTab label="S-06.지붕1보*" closable active />
      <button type="button" aria-label="새 도면" className="mb-1 ml-0.5 flex h-[13px] w-[21px] items-center justify-center rounded-tl-sm rounded-tr-lg rounded-br-sm rounded-bl-lg bg-[#333b48]">
        <svg width="9" height="9"><path d="M4.500 0v9M0 4.500h9" stroke="#a8adb5" strokeWidth="2" /></svg>
      </button>
    </nav>
  );
}

function ViewCube() {
  return (
    <svg width="126" height="160" className="absolute top-0 right-0" fill="none" aria-label="ViewCube">
      <circle cx="59" cy="66" r="43" stroke="#4d525b" strokeWidth="9" />
      <path d="M38.500 45.500h41v41h-41z" fill="#d6d7d9" stroke="#8c8570" />
      <path d="M46 53h26v26H46z" fill="#b9bec6" />
      <text x="59" y="70" textAnchor="middle" fontSize="10" fill="#2c3440">평면도</text>
      <path d="M54 35h10l-5 5zM54 97h10l-5-5zM28 61v10l5-5zM90 61v10l-5-5z" fill="#e4e4e4" />
      <g fill="#a4a7ab" fontSize="15" textAnchor="middle">
        <text x="59" y="26">북</text>
        <text x="59" y="117">남</text>
        <text x="13" y="72">서</text>
        <text x="104" y="72">동</text>
      </g>
      <path d="M3 13l6-6 6 6h-2v6h-3v-4H8v4H5v-6z" fill="#74777c" />
      <path d="M91 9l7-4v3c4 0 8 1 11 4l-2 3c-3-3-6-3-9-3v2z" fill="#74777c" />
      <path d="M111 18l4-2c4 4 5 8 4 12h3l-5 7-4-8h2c0-3-1-6-4-9z" fill="#74777c" />
      <path d="M107.500 113.500h9M109 116h7l-3.500 4z" stroke="#85888d" fill="#85888d" />
      <rect x="35.500" y="136.500" width="46" height="16" rx="4" fill="#bfc2c8" stroke="#8d9096" />
      <text x="39" y="148" fontSize="11" fill="#444a54" fontFamily="Liberation Sans, sans-serif">WCS</text>
      <path d="M69 142h9l-4.500 5z" stroke="#eef" fill="#aeb2b8" />
    </svg>
  );
}

function DrawingArea() {
  return (
    <main className="relative min-w-0 flex-1 overflow-hidden bg-[#212830]">
      <p className="pl-[3px] pt-1 text-[13px] leading-[18px] text-[#e6e6e6]">[−][평면도][2D 와이어프레임]</p>

      {/* beam plan and section */}
      <svg className="absolute inset-0 h-full w-full" fill="none" stroke="#e6e6e6" shapeRendering="crispEdges">
        <rect x="222.500" y="168.500" width="518" height="41" />
        <rect x="222.500" y="268.500" width="518" height="82" />
        <rect x="474.500" y="291.500" width="107" height="31" />
        <path d="M474.500 291.500l107 31M581.500 291.500l-107 31" shapeRendering="auto" />
      </svg>

      {/* sheet frame running off the right side */}
      <div className="absolute top-2.5 right-0 bottom-px w-28 border-t border-b border-l border-[#00e0e0]" />
      <svg width="34" height="565" className="absolute top-0 right-0" fill="none">
        <path d="M34 171.500H1.500v14H34M34 299.500H1.500v14H34M34 444.500H1.500v14H34" stroke="#e6e6e6" />
        <g fill="#ff00ff" fontSize="10">
          <text x="4" y="182">상부 1단</text>
          <text x="4" y="310">하부 1단</text>
          <text x="4" y="455">스 터 럽</text>
          <text x="24" y="499">≒철</text>
          <text x="26" y="517">≒철</text>
        </g>
      </svg>

      <ViewCube />

      <svg width="90" height="90" className="absolute bottom-0 left-0" fill="none" stroke="#e6e6e6" aria-label="UCS">
        <path d="M15.500 25v51M15 75.500h51M10.500 70.500h10v10h-10z" shapeRendering="crispEdges" />
        <path d="M17 8l6 7 7-7M23.500 15v6M70 61l13 12M83 61l-13 12" />
      </svg>
    </main>
  );
}

function CommandLine() {
  return (
    <section aria-label="명령행" className="flex h-[62px] shrink-0 border-t-[3px] border-[#3b4453] bg-[#222933]">
      <div className="flex w-[25px] shrink-0 flex-col items-center justify-between pt-1 pr-0.5 pb-[5px]">
        <div className="flex flex-col items-center gap-1.5">
          <svg width="17" height="7" shapeRendering="crispEdges" aria-hidden="true">
            <path d="M0 2h17M0 5h17" stroke="#d8dade" strokeWidth="2" strokeDasharray="2 1" />
          </svg>
          <button type="button" aria-label="닫기">
            <svg width="10" height="10"><path d="M1 1l8 8M9 1L1 9" stroke="#d8dade" strokeWidth="2" /></svg>
          </button>
        </div>
        <button type="button" aria-label="사용자화">
          <svg width="16" height="16" fill="none"><path d="M2 14l7-7" stroke="#d8dade" strokeWidth="3" /><path d="M14 3a3.500 3.500 0 1 1-4-2" stroke="#d8dade" strokeWidth="2.500" /></svg>
        </button>
      </div>
      <div className="mt-px flex min-w-0 flex-1 flex-col font-['Liberation_Mono','Noto_Sans_CJK_KR',monospace] text-[13px]">
        <div className="h-[37px] bg-[#c8c8c8] pl-[3px] pt-[5px] leading-[15px] text-black">
          <p>대상 객체를 선택 또는 [설정(S)]:</p>
          <p>대상 객체를 선택 또는 [설정(S)]:</p>
        </div>
        <div className="mt-px flex h-5 items-center bg-white">
          <svg width="17" height="13" className="ml-1 shrink-0" fill="none">
            <path d="M.5.5h16v12H.5z" fill="#eee" stroke="#666" />
            <path d="M1 2h15" stroke="#888" strokeWidth="2" />
            <path d="M3 5l3 2.500L3 10M7 10.500h4" stroke="#444" />
          </svg>
          <svg width="7" height="4" className="ml-0.5 shrink-0"><path d="M0 0h7L3.500 4z" fill="#555" /></svg>
          <input
            type="text"
            aria-label="명령 입력"
            placeholder="명령 입력"
            className="ml-2 w-full flex-1 text-[13px] text-black italic outline-none placeholder:text-[#8c8c8c]"
          />
        </div>
      </div>
    </section>
  );
}

function LayoutTab({ label, active }: { label: string; active?: boolean }) {
  const fill = active ? '#3b4453' : '#2b323e';
  return (
    <div className="-mr-1.5 flex h-[18px]">
      <svg width="10" height="18"><path d="M0 0c6 1 4 17 10 18V0z" fill={fill} /></svg>
      <button type="button" className={clsx('w-9 text-center text-[13px] leading-[18px]', active ? 'bg-[#3b4453] text-white' : 'bg-[#2b323e] text-[#b0b4bb]')}>{label}</button>
      <svg width="12" height="18"><path d="M12 0C6 1 8 17 0 18V0z" fill={fill} /></svg>
    </div>
  );
}

function StatusButton({ label, on, children, wide }: { label: string; on?: boolean; children: ReactNode; wide?: boolean }) {
  return (
    <button type="button" aria-label={label} className={clsx('flex h-[22px] items-center justify-center', wide ? 'w-6' : 'w-[22px]', on && 'bg-[#5b8cc3]')}>
      <svg width="18" height="18" fill="none" stroke="#e0e2e5">{children}</svg>
    </button>
  );
}

function StatusGroup({ children }: { children: ReactNode }) {
  return <div className="flex items-center gap-0.5 bg-[#3b4453]">{children}</div>;
}

const person = 'M9 1l2 8 5 7-6-2.500L9 11l-1 2.500L2 16l5-7z';

function StatusBar() {
  return (
    <footer className="flex h-[27px] shrink-0 justify-between border-t border-[#3b4453] bg-[#222933] whitespace-nowrap">
      <nav className="flex pl-[7px]">
        <LayoutTab label="모형" active />
        <LayoutTab label="배치1" />
        <LayoutTab label="배치2" />
        <button type="button" aria-label="새 배치" className="mt-0.5 ml-2 flex h-[15px] w-5 items-center justify-center rounded-tr-lg rounded-bl-lg bg-[#333b48]">
          <svg width="9" height="9"><path d="M4.500 0v9M0 4.500h9" stroke="#a8adb5" strokeWidth="2" /></svg>
        </button>
      </nav>
      <div className="mt-[3px] flex h-[22px] gap-[3px] text-[12px] text-[#eceef1]">
        <button type="button" className="w-[60px] bg-[#3b4453]">ArchiOffice</button>
        <button type="button" className="w-[27px] bg-[#3b4453] text-[13px]">모형</button>
        <StatusGroup>
          <StatusButton label="그리드" wide><path d="M4.500 1v16M9.500 1v16M13.500 1v16M1 4.500h16M1 9.500h16M1 13.500h16" /></StatusButton>
          <StatusButton label="스냅" on><path d="M3 4h14M3 9h14M3 14h14" stroke="#fff" strokeWidth="2" strokeDasharray="2 3" shapeRendering="crispEdges" /></StatusButton>
          <Caret className="mx-1" />
        </StatusGroup>
        <StatusGroup>
          <StatusButton label="직교" on><path d="M2.500 1v15.500H17M3 11.500h4.500v5" /></StatusButton>
          <StatusButton label="극좌표"><circle cx="8" cy="10" r="6.500" /><path d="M8 10.500h9M8 10l6-7M11.500 7v3" /></StatusButton>
          <Caret className="mx-1" />
          <StatusButton label="등각투영"><path d="M9.500 1v17" stroke="#50c070" /><path d="M3 2l13 14" stroke="#e06060" /><path d="M8.500 8.500h2v2h-2z" fill="#333" /></StatusButton>
          <Caret className="mx-1" />
        </StatusGroup>
        <StatusGroup>
          <StatusButton label="객체 스냅 추적"><path d="M16 3L2 15.500h15" /><path d="M8 8h2v2H8z" fill="#e0e2e5" /></StatusButton>
          <StatusButton label="객체 스냅" on><path d="M.5 1.500h4v4h-4zM7 3.500h9.500v13h-13V8" /></StatusButton>
          <Caret className="mx-1" />
        </StatusGroup>
        <StatusGroup>
          <StatusButton label="주석 가시성" on><path d={person} fill="#fff" stroke="none" /><circle cx="14" cy="4" r="2" /></StatusButton>
          <StatusButton label="자동 축척" wide><path d={person} fill="#d4d6da" stroke="none" /><path d="M14 1l-2 4h3l-2 4" /></StatusButton>
          <StatusButton label="축척"><path d={person} fill="#d4d6da" stroke="none" /></StatusButton>
          <button type="button" className="flex items-center gap-[3px] px-0.5">1:1<Caret /></button>
        </StatusGroup>
        <StatusGroup>
          <StatusButton label="작업공간"><circle cx="9" cy="9" r="4" strokeWidth="3" /><circle cx="9" cy="9" r="6.500" strokeWidth="3" strokeDasharray="3 2.100" /></StatusButton>
          <Caret className="mx-1" />
        </StatusGroup>
        <StatusGroup>
          <StatusButton label="주석 감시" wide><path d="M9 1v16M1 9h16" strokeWidth="2" /></StatusButton>
        </StatusGroup>
        <StatusGroup>
          <StatusButton label="객체 분리" wide><path d="M1.500 2.500h5v5h-5zM7.500 11.500l3.500 5H4z" /><circle cx="14" cy="9" r="2.500" /></StatusButton>
        </StatusGroup>
        <StatusGroup>
          <StatusButton label="하드웨어 가속" wide><path d="M2 2h8l4 4v7H2z" fill="#2f6fae" stroke="none" /><path d="M2 5.500h7M5.500 2v6" /><path d="M1 11h6v5H1z" fill="#f0b040" stroke="none" /><path d="M7 13l3 3 6-6" stroke="#60d060" strokeWidth="3" /></StatusButton>
          <StatusButton label="성능 경고"><path d="M1 2h15v13H1z" fill="#d8dade" stroke="none" /><path d="M2 9l4-5 4 6 4-4" stroke="#445" /><path d="M12 9l5 8H7z" fill="#e89060" /></StatusButton>
        </StatusGroup>
        <StatusGroup>
          <StatusButton label="화면 정리" wide><path d="M1.500 3.500h15v11h-15zM4.500 9.500v3h3M4.500 12.500l3-3M11 5.500h3v3M14 5.500l-3 3" /></StatusButton>
          <StatusButton label="사용자화"><path d="M1 3h16M1 9h16M1 15h16" strokeWidth="2" /></StatusButton>
        </StatusGroup>
      </div>
    </footer>
  );
}

export default function App() {
  return (
    <div className="flex h-screen flex-col overflow-hidden bg-[#3b4453] font-['Open_Sans','Noto_Sans_CJK_KR',sans-serif]">
      <MenuBar />
      <div className="flex shrink-0 flex-col bg-[#222933]">
        <RibbonTabs />
        <Ribbon />
      </div>
      <DocTabs />
      <div className="flex min-h-0 flex-1 overflow-hidden">
        <aside className="flex w-[85px] shrink-0 items-start gap-[3px]">
          <div className="flex flex-col gap-px">
            <Toolbar items={LEFT_1} label="건축" />
            <Toolbar items="nodes" label="노드" />
          </div>
          <Toolbar items={LEFT_2} label="유틸리티" />
          <Toolbar items={LEFT_3} label="철근" />
        </aside>
        <DrawingArea />
        <aside className="flex w-[58px] shrink-0 items-start gap-[3px] pl-1">
          <Toolbar items={RIGHT_1} label="그리기" />
          <Toolbar items={RIGHT_2} label="수정" />
        </aside>
      </div>
      <CommandLine />
      <StatusBar />
    </div>
  );
}
